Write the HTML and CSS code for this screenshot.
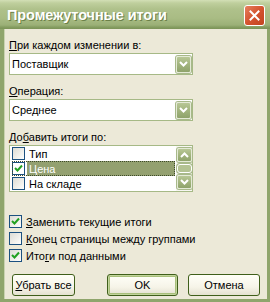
FILE: index.html
```html
<!DOCTYPE html>
<html>
<head>
  <meta charset="utf-8">
  <title>Промежуточные итоги</title>
  <link rel="stylesheet" href="styles.css">
</head>
<body>
  <div class="window">
    <div class="titlebar">
      <span class="title">Промежуточные итоги</span>
      <span class="close">
        <svg width="11" height="11" viewBox="0 0 11 11"><path d="M1.5 1.5 L9.5 9.5 M9.5 1.5 L1.5 9.5" stroke="#fff" stroke-width="2" stroke-linecap="square"/></svg>
      </span>
    </div>

    <div class="content">
      <div class="label"><u>П</u>ри каждом изменении в:</div>
      <div class="combo">
        <span class="combo-text">Поставщик</span>
        <span class="drop"><svg width="9" height="6" viewBox="0 0 9 6"><path d="M1 1 L4.5 4.5 L8 1" fill="none" stroke="#fff" stroke-width="2"/></svg></span>
      </div>

      <div class="label"><u>О</u>перация:</div>
      <div class="combo">
        <span class="combo-text">Среднее</span>
        <span class="drop"><svg width="9" height="6" viewBox="0 0 9 6"><path d="M1 1 L4.5 4.5 L8 1" fill="none" stroke="#fff" stroke-width="2"/></svg></span>
      </div>

      <div class="label">До<u>б</u>авить итоги по:</div>
      <div class="listbox">
        <div class="items">
          <div class="item"><span class="box"></span><span class="item-text">Тип</span></div>
          <div class="item selected"><span class="box checked"><svg width="9" height="9" viewBox="0 0 9 9"><path d="M1 4 L3.5 6.5 L8 1.5" fill="none" stroke="#21a121" stroke-width="2"/></svg></span><span class="item-text">Цена</span></div>
          <div class="item"><span class="box"></span><span class="item-text">На складе</span></div>
        </div>
        <div class="scrollbar">
          <span class="sbtn"><svg width="9" height="6" viewBox="0 0 9 6"><path d="M1 5 L4.5 1.5 L8 5" fill="none" stroke="#fff" stroke-width="2"/></svg></span>
          <span class="track"><span class="thumb"></span></span>
          <span class="sbtn"><svg width="9" height="6" viewBox="0 0 9 6"><path d="M1 1 L4.5 4.5 L8 1" fill="none" stroke="#fff" stroke-width="2"/></svg></span>
        </div>
      </div>

      <div class="options">
        <div class="option"><span class="box"><svg width="9" height="9" viewBox="0 0 9 9"><path d="M1 4 L3.5 6.5 L8 1.5" fill="none" stroke="#21a121" stroke-width="2"/></svg></span><span><u>З</u>аменить текущие итоги</span></div>
        <div class="option"><span class="box"></span><span><u>К</u>онец страницы между группами</span></div>
        <div class="option"><span class="box"><svg width="9" height="9" viewBox="0 0 9 9"><path d="M1 4 L3.5 6.5 L8 1.5" fill="none" stroke="#21a121" stroke-width="2"/></svg></span><span>Ито<u>г</u>и под данными</span></div>
      </div>

      <div class="buttons">
        <button class="btn btn-remove"><u>У</u>брать все</button>
        <button class="btn btn-ok">OK</button>
        <button class="btn btn-cancel">Отмена</button>
      </div>
    </div>
  </div>
</body>
</html>
```

FILE: styles.css
```css
body {
  margin: 0;
  font-family: 'Liberation Sans', Arial, sans-serif;
  font-size: 11px;
  color: #000;
  background: #ece9d8;
}

.window {
  width: 270px;
  height: 302px;
  box-sizing: border-box;
  display: flex;
  flex-direction: column;
  background: #8fa56c;
}

.titlebar {
  height: 29px;
  display: flex;
  align-items: center;
  justify-content: space-between;
  padding: 0 5px 0 7px;
  background: linear-gradient(to bottom, #d3dfb6 0, #bfcf9d 3px, #afc18b 9px, #a9bc84 18px, #9bb077 25px, #869e62 27px, #7b9357 29px);
}

.title {
  color: #fff;
  font-weight: bold;
  font-size: 14.5px;
  letter-spacing: -0.1px;
  text-shadow: 1px 1px 0 #6b8048;
  margin-top: 1px;
}

.close {
  width: 19px;
  height: 19px;
  border: 1px solid #fff;
  border-radius: 3px;
  display: flex;
  align-items: center;
  justify-content: center;
  background: linear-gradient(135deg, #e6805e 0%, #d4532f 50%, #c2441f 100%);
  margin-top: 1px;
}

.content {
  flex: 1;
  margin: 0 3px 3px 4px;
  padding: 10px 7px 0 5px;
  background: #ece9d8;
  box-shadow: inset 1px 0 0 #c9d3b0;
}

.label {
  height: 13px;
  line-height: 13px;
  margin-bottom: 1px;
}

.combo {
  width: 182px;
  height: 20px;
  border: 1px solid #a6b986;
  background: #fff;
  display: flex;
  align-items: center;
  justify-content: space-between;
  margin-bottom: 10px;
}

.combo-text {
  padding-left: 2px;
}

.drop,
.sbtn {
  width: 15px;
  height: 17px;
  margin-right: 1px;
  box-sizing: border-box;
  border: 1px solid #e4ead6;
  border-radius: 2px;
  display: flex;
  align-items: center;
  justify-content: center;
  background: linear-gradient(to bottom, #b8c796 0%, #a2b47e 50%, #8fa36b 100%);
  box-shadow: 0 0 0 1px #a8b98a;
}

.listbox {
  width: 182px;
  height: 45px;
  border: 1px solid #a6b986;
  background: #fff;
  display: flex;
  margin-bottom: 21px;
}

.items {
  flex: 1;
  padding-left: 2px;
}

.item {
  height: 15px;
  display: flex;
  align-items: center;
  box-sizing: border-box;
}

.item .box {
  margin-right: 3px;
}

.item.selected {
  outline: 1px dotted #3d4a2a;
  outline-offset: -1px;
  margin-right: 1px;
  background: linear-gradient(to right, #fff 0, #fff 15px, #93a070 15px);
  color: #fff;
}

.item-text {
  padding: 0 1px;
}

.box {
  width: 11px;
  height: 11px;
  border: 1px solid #1c5180;
  background: linear-gradient(135deg, #dcdcd5 0%, #f4f4f0 70%, #fff 100%);
  display: inline-flex;
  align-items: center;
  justify-content: center;
  flex: none;
}

.box.checked {
  background: #fff;
}

.scrollbar {
  width: 16px;
  display: flex;
  flex-direction: column;
  align-items: center;
  padding-top: 1px;
  background: #f7f7f2;
}

.scrollbar .sbtn {
  height: 14px;
  margin: 1px 0 0;
}

.track {
  height: 12px;
  display: flex;
  align-items: center;
}

.thumb {
  width: 13px;
  height: 7px;
  border: 1px solid #fff;
  border-radius: 3px;
  background: #b4c393;
  box-shadow: 0 0 0 1px #a8b98a;
}

.options {
  margin-bottom: 10px;
}

.option {
  height: 17px;
  display: flex;
  align-items: center;
}

.option .box {
  margin-right: 4px;
}

.buttons {
  display: flex;
  padding-left: 3px;
}

.btn {
  height: 22px;
  box-sizing: border-box;
  font: inherit;
  color: #000;
  border: 1px solid #3f5f1a;
  border-radius: 3px;
  background: linear-gradient(to bottom, #fffff8 0%, #f6f4e8 60%, #e4e1d0 100%);
  padding: 0;
}

.btn-remove {
  width: 63px;
}

.btn-ok {
  width: 71px;
  margin-left: auto;
  margin-right: 10px;
  box-shadow: inset 0 0 0 1px #c2d49c, inset 0 0 0 2px #a8bf7b;
}

.btn-cancel {
  width: 72px;
}
```
